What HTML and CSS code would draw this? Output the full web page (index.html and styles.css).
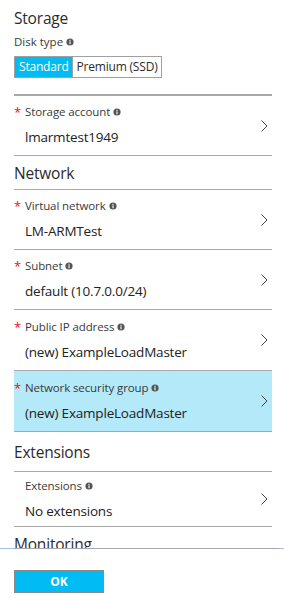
FILE: index.html
```html
<!DOCTYPE html>
<html>
<head>
<meta charset="utf-8">
<link rel="stylesheet" href="styles.css">
</head>
<body>
<div class="blade">
  <div class="pane">
    <div class="title first">Storage</div>
    <div class="field-label">Disk type <svg class="info" viewBox="0 0 10 10"><circle cx="5" cy="5" r="4.5"/><rect x="4.3" y="4.2" width="1.4" height="3.6" fill="#fff"/><rect x="4.3" y="2.2" width="1.4" height="1.4" fill="#fff"/></svg></div>
    <div class="toggle">
      <span class="opt on">Standard</span><span class="opt">Premium (SSD)</span>
    </div>
    <div class="rule gap"></div>

    <div class="row">
      <div class="row-text">
        <div class="lbl"><span class="req">*</span>Storage account <svg class="info" viewBox="0 0 10 10"><circle cx="5" cy="5" r="4.5"/><rect x="4.3" y="4.2" width="1.4" height="3.6" fill="#fff"/><rect x="4.3" y="2.2" width="1.4" height="1.4" fill="#fff"/></svg></div>
        <div class="val">lmarmtest1949</div>
      </div>
      <svg class="chev" viewBox="0 0 7 12"><polyline points="0.5,0.5 6,6 0.5,11.5"/></svg>
    </div>

    <div class="title sec">Network</div>

    <div class="row">
      <div class="row-text">
        <div class="lbl"><span class="req">*</span>Virtual network <svg class="info" viewBox="0 0 10 10"><circle cx="5" cy="5" r="4.5"/><rect x="4.3" y="4.2" width="1.4" height="3.6" fill="#fff"/><rect x="4.3" y="2.2" width="1.4" height="1.4" fill="#fff"/></svg></div>
        <div class="val">LM-ARMTest</div>
      </div>
      <svg class="chev" viewBox="0 0 7 12"><polyline points="0.5,0.5 6,6 0.5,11.5"/></svg>
    </div>

    <div class="row">
      <div class="row-text">
        <div class="lbl"><span class="req">*</span>Subnet <svg class="info" viewBox="0 0 10 10"><circle cx="5" cy="5" r="4.5"/><rect x="4.3" y="4.2" width="1.4" height="3.6" fill="#fff"/><rect x="4.3" y="2.2" width="1.4" height="1.4" fill="#fff"/></svg></div>
        <div class="val">default (10.7.0.0/24)</div>
      </div>
      <svg class="chev" viewBox="0 0 7 12"><polyline points="0.5,0.5 6,6 0.5,11.5"/></svg>
    </div>

    <div class="row tall">
      <div class="row-text">
        <div class="lbl"><span class="req">*</span>Public IP address <svg class="info" viewBox="0 0 10 10"><circle cx="5" cy="5" r="4.5"/><rect x="4.3" y="4.2" width="1.4" height="3.6" fill="#fff"/><rect x="4.3" y="2.2" width="1.4" height="1.4" fill="#fff"/></svg></div>
        <div class="val">(new) ExampleLoadMaster</div>
      </div>
      <svg class="chev" viewBox="0 0 7 12"><polyline points="0.5,0.5 6,6 0.5,11.5"/></svg>
    </div>

    <div class="row tall selected">
      <div class="row-text">
        <div class="lbl"><span class="req">*</span>Network security group <svg class="info" viewBox="0 0 10 10"><circle cx="5" cy="5" r="4.5"/><rect x="4.3" y="4.2" width="1.4" height="3.6" fill="#fff"/><rect x="4.3" y="2.2" width="1.4" height="1.4" fill="#fff"/></svg></div>
        <div class="val">(new) ExampleLoadMaster</div>
      </div>
      <svg class="chev" viewBox="0 0 7 12"><polyline points="0.5,0.5 6,6 0.5,11.5"/></svg>
    </div>

    <div class="title sec big">Extensions</div>

    <div class="row short">
      <div class="row-text">
        <div class="lbl"><span class="req blank"></span>Extensions <svg class="info" viewBox="0 0 10 10"><circle cx="5" cy="5" r="4.5"/><rect x="4.3" y="4.2" width="1.4" height="3.6" fill="#fff"/><rect x="4.3" y="2.2" width="1.4" height="1.4" fill="#fff"/></svg></div>
        <div class="val">No extensions</div>
      </div>
      <svg class="chev" viewBox="0 0 7 12"><polyline points="0.5,0.5 6,6 0.5,11.5"/></svg>
    </div>

    <div class="title sec">Monitoring</div>
  </div>
  <div class="footer">
    <div class="footer-rule"><span class="edge-l"></span><span class="mid"></span><span class="edge-r"></span></div>
    <div class="footer-body">
      <button class="ok">OK</button>
    </div>
  </div>
</div>
</body>
</html>
```

FILE: styles.css
```css
html, body {
  margin: 0;
  padding: 0;
  background: #fff;
}
body {
  font-family: "Open Sans", "Noto Sans", sans-serif;
  color: #222;
  width: 284px;
  height: 600px;
  overflow: hidden;
}
.blade {
  display: flex;
  flex-direction: column;
  height: 600px;
}
.pane {
  height: 548px;
  overflow: hidden;
  padding: 0 12px 0 14px;
  box-sizing: border-box;
}
.title {
  font-size: 15.5px;
  line-height: 20px;
  color: #2b2b2b;
  letter-spacing: -0.2px;
}
.title.first {
  padding-top: 8px;
}
.title.sec {
  border-top: 1px solid #a8a8a8;
  height: 33px;
  display: flex;
  align-items: center;
}
.title.sec.big {
  height: 39px;
}
.field-label {
  margin-top: 6px;
  font-size: 11.5px;
  line-height: 16px;
  color: #3a3a3a;
  display: flex;
  align-items: center;
  gap: 3px;
}
.info {
  width: 8px;
  height: 8px;
  fill: #555;
  flex: none;
}
.toggle {
  margin-top: 6px;
  display: inline-flex;
  border: 1px solid #a0a0a0;
  height: 20px;
}
.opt {
  font-size: 12px;
  line-height: 20px;
  padding: 0 4px;
  color: #2b2b2b;
  letter-spacing: -0.2px;
}
.opt.on {
  background: #00bcf2;
  color: #fff;
  border-right: 1px solid #a0a0a0;
  padding: 0 3px 0 4px;
}
.rule.gap {
  margin-top: 16px;
  border-top: 1px solid #a8a8a8;
}
.row {
  border-top: 1px solid #a8a8a8;
  height: 59px;
  display: flex;
  align-items: center;
  padding-right: 4px;
}
.row.tall {
  height: 60px;
}
.row.short {
  height: 54px;
}
.row.selected {
  background: #b3e9f9;
}
.row-text {
  flex: 1;
  display: flex;
  flex-direction: column;
  gap: 7px;
}
.lbl {
  font-size: 11.5px;
  line-height: 16px;
  color: #3a3a3a;
  display: flex;
  align-items: center;
  letter-spacing: -0.1px;
}
.lbl .info {
  margin-left: 3px;
}
.req {
  color: #e81123;
  width: 11px;
  font-size: 13px;
  line-height: 16px;
  flex: none;
}
.val {
  padding-left: 11px;
  font-size: 13.5px;
  line-height: 20px;
  color: #222;
  letter-spacing: -0.2px;
}
.chev {
  width: 7px;
  height: 12px;
  fill: none;
  stroke: #444;
  stroke-width: 1;
  flex: none;
}
.footer {
  flex: 1;
  display: flex;
  flex-direction: column;
}
.footer-rule {
  display: flex;
  height: 1px;
}
.edge-l {
  width: 14px;
  background: #9ec3ee;
}
.mid {
  flex: 1;
  background: #a8a8a8;
}
.edge-r {
  width: 5px;
  background: #9ec3ee;
}
.footer-body {
  padding: 20px 0 0 14px;
}
.ok {
  width: 90px;
  height: 23px;
  background: #00bcf2;
  border: 1px solid #8a8a8a;
  color: #fff;
  font-family: "Open Sans", "Noto Sans", sans-serif;
  font-weight: bold;
  font-size: 12px;
  padding: 0;
}
```
